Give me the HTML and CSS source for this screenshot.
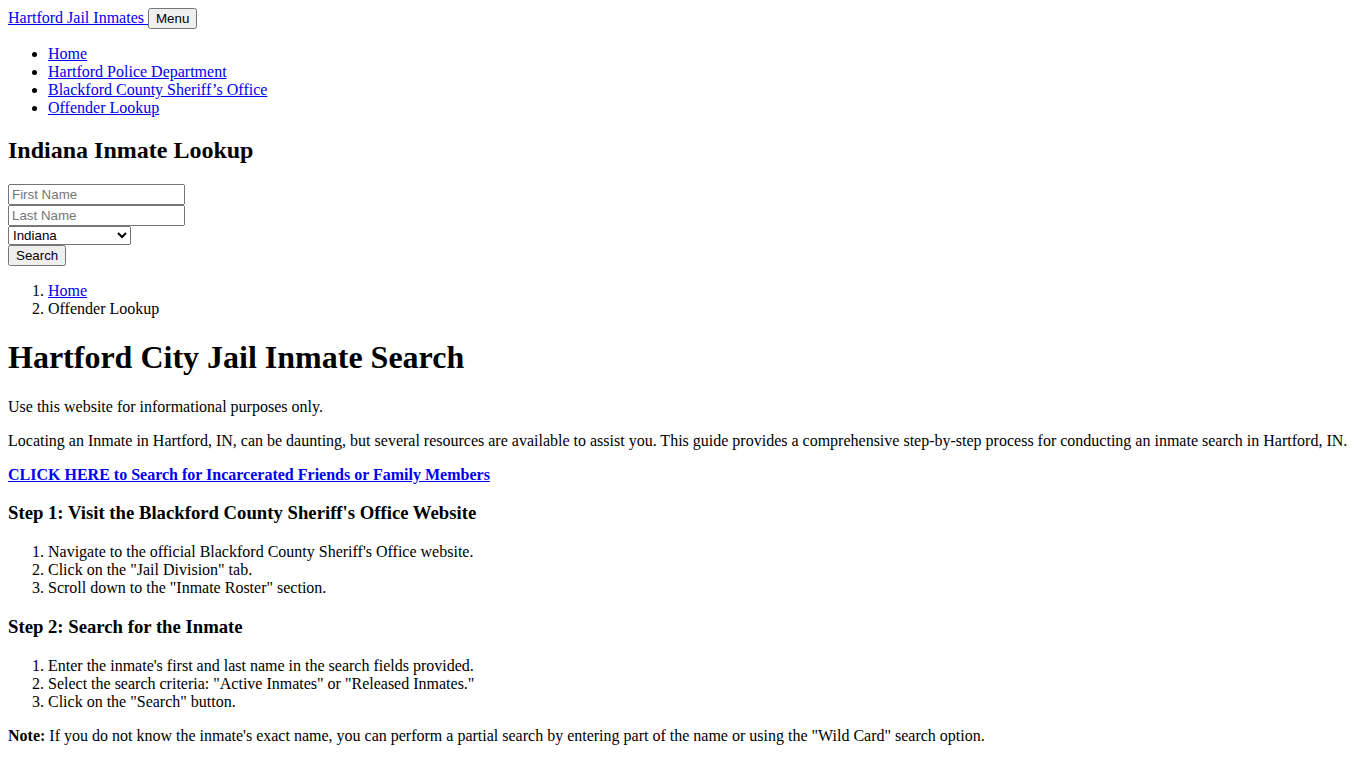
FILE: index.html
```html
<!DOCTYPE html>
<html lang="en">
<head>
  <meta charset="UTF-8">
  <meta name="viewport" content="width=device-width,initial-scale=1">
  <title>Hartford City Jail Inmate Search</title>
  <link rel="stylesheet" href="styles.css">
</head>
<body>

  <header class="site-header">
    <a class="site-title" href="#">Hartford Jail Inmates </a><button class="menu-btn" type="button">Menu</button>
    <nav>
      <ul class="main-nav">
        <li><a href="#">Home</a></li>
        <li><a href="#">Hartford Police Department</a></li>
        <li><a href="#">Blackford County Sheriff’s Office</a></li>
        <li><a href="#">Offender Lookup</a></li>
      </ul>
    </nav>
  </header>

  <section class="lookup">
    <h2>Indiana Inmate Lookup</h2>
    <form class="lookup-form">
      <input class="field" type="text" placeholder="First Name">
      <input class="field" type="text" placeholder="Last Name">
      <select class="field state">
        <option>Indiana</option>
        <option>Illinois</option>
        <option>Kentucky</option>
        <option>Michigan</option>
        <option>Ohio</option>
      </select>
      <button class="search-btn" type="submit">Search</button>
    </form>
  </section>

  <ol class="breadcrumb">
    <li><a href="#">Home</a></li>
    <li>Offender Lookup</li>
  </ol>

  <main class="content">
    <h1>Hartford City Jail Inmate Search</h1>
    <p>Use this website for informational purposes only.</p>
    <p>Locating an Inmate in Hartford, IN, can be daunting, but several resources are available to assist you. This guide provides a comprehensive step-by-step process for conducting an inmate search in Hartford, IN.</p>
    <p><a href="#"><strong>CLICK HERE to Search for Incarcerated Friends or Family Members</strong></a></p>

    <h3>Step 1: Visit the Blackford County Sheriff's Office Website</h3>
    <ol>
      <li>Navigate to the official Blackford County Sheriff's Office website.</li>
      <li>Click on the "Jail Division" tab.</li>
      <li>Scroll down to the "Inmate Roster" section.</li>
    </ol>

    <h3>Step 2: Search for the Inmate</h3>
    <ol>
      <li>Enter the inmate's first and last name in the search fields provided.</li>
      <li>Select the search criteria: "Active Inmates" or "Released Inmates."</li>
      <li>Click on the "Search" button.</li>
    </ol>

    <p><strong>Note:</strong> If you do not know the inmate's exact name, you can perform a partial search by entering part of the name or using the "Wild Card" search option.</p>
  </main>

</body>
</html>
```

FILE: styles.css
```css
body {
  font-family: "Liberation Serif", "Times New Roman", serif;
  font-size: 16px;
}
input, select, button {
  font-family: "Liberation Sans", Arial, sans-serif;
  font-size: 13.33px;
}
.lookup-form .field,
.search-btn {
  display: block;
}
.lookup-form input.field {
  width: 177px;
  box-sizing: border-box;
}
.lookup-form .state {
  width: 123px;
}
```
